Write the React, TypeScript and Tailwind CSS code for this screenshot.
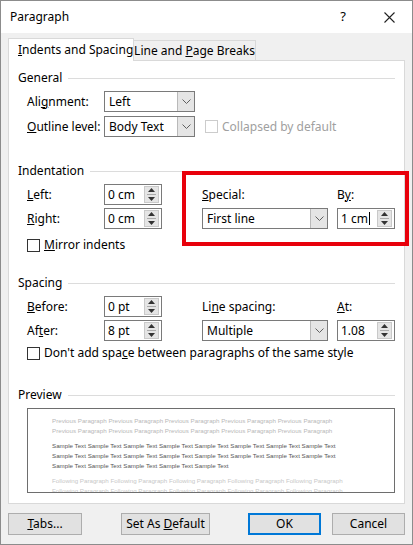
const U = ({ children }: { children: React.ReactNode }) => <span className="underline">{children}</span>;

const Arrow = () => (
  <div className="w-[17px] h-full bg-[#e5e5e5] border-l border-[#b9b9b9] flex items-center justify-center">
    <svg width="9" height="6" viewBox="0 0 9 6"><path d="M0.5 0.5 L4.5 4.5 L8.5 0.5" stroke="#606060" fill="none" /></svg>
  </div>
);

const Select = ({ value, w }: { value: string; w: string }) => (
  <div className={`${w} h-[21px] bg-white border border-[#7a7a7a] flex items-center`}>
    <span className="flex-1 pl-[4px]">{value}</span>
    <Arrow />
  </div>
);

const Spin = ({ value, w = "w-[58px]", caret = false }: { value: string; w?: string; caret?: boolean }) => (
  <div className={`${w} h-[21px] bg-white border border-[#7a7a7a] flex items-center`}>
    <span className="flex-1 pl-[3px] flex items-center">
      {value}
      {caret && <span className="w-px h-[13px] bg-black ml-px" />}
    </span>
    <div className="w-[15px] h-[17px] mr-[2px] bg-[#e5e5e5] border border-[#c9c9c9] flex flex-col items-center justify-center gap-[2px]">
      <svg width="7" height="4" viewBox="0 0 7 4"><path d="M0 4 L3.5 0 L7 4Z" fill="#333" /></svg>
      <div className="w-[9px] h-px bg-[#aaa]" />
      <svg width="7" height="4" viewBox="0 0 7 4"><path d="M0 0 L3.5 4 L7 0Z" fill="#333" /></svg>
    </div>
  </div>
);

const Box = ({ disabled = false }: { disabled?: boolean }) => (
  <div className={`w-[13px] h-[13px] bg-white border ${disabled ? "border-[#ccc]" : "border-[#333]"}`} />
);

const Group = ({ title }: { title: string }) => (
  <div className="flex items-center gap-[6px] h-[14px]">
    <span>{title}</span>
    <div className="flex-1 h-px bg-[#dcdcdc]" />
  </div>
);

const Btn = ({ children, w, primary = false }: { children: React.ReactNode; w: string; primary?: boolean }) => (
  <div className={`${w} h-[22px] flex items-center justify-center bg-[#e1e1e1] ${primary ? "border-2 border-[#0078d7]" : "border border-[#adadad]"}`}>
    <span className="whitespace-nowrap">{children}</span>
  </div>
);

const prev = "Previous Paragraph Previous Paragraph Previous Paragraph Previous Paragraph Previous Paragraph";
const sample = "Sample Text Sample Text Sample Text Sample Text Sample Text Sample Text Sample Text Sample Text";
const foll = "Following Paragraph Following Paragraph Following Paragraph Following Paragraph Following Paragraph";

export default function App() {
  return (
    <div className="w-[413px] h-[545px] bg-[#f0f0f0] border border-[#8c8c8c] text-[12px] text-black flex flex-col" style={{ fontFamily: '"Noto Sans", "Open Sans", sans-serif' }}>
      <div className="h-[32px] bg-white flex items-center pl-[9px] shrink-0">
        <span className="flex-1 text-[12px]">Paragraph</span>
        <span className="w-[46px] text-center text-[13px]">?</span>
        <span className="w-[46px] flex justify-center">
          <svg width="11" height="11" viewBox="0 0 11 11"><path d="M0.5 0.5 L10.5 10.5 M10.5 0.5 L0.5 10.5" stroke="#222" strokeWidth="1.1" /></svg>
        </span>
      </div>

      <div className="px-[7px] pt-[5px] flex flex-col">
        <div className="flex items-end h-[22px] relative z-10">
          <div className="w-[126px] h-[23px] bg-white border border-b-0 border-[#d9d9d9] flex items-center pl-[9px] -mb-px">
            <span className="whitespace-nowrap"><U>I</U>ndents and Spacing</span>
          </div>
          <div className="w-[122px] h-[20px] bg-[#f0f0f0] border border-l-0 border-b-0 border-[#d9d9d9] flex items-center justify-center">
            <span className="whitespace-nowrap">Line and <U>P</U>age Breaks</span>
          </div>
        </div>
        <div className="h-[444px] bg-white border border-[#d9d9d9] relative px-[9px] pt-[10px]">
          <Group title="General" />
          <div className="pl-[9px] mt-[6px] flex flex-col gap-[4px]">
            <div className="flex items-center h-[21px]">
              <span className="w-[77px]">Ali<U>g</U>nment:</span>
              <Select value="Left" w="w-[91px]" />
            </div>
            <div className="flex items-center h-[21px]">
              <span className="w-[77px]"><U>O</U>utline level:</span>
              <Select value="Body Text" w="w-[91px]" />
              <div className="ml-[10px] flex items-center gap-[4px] text-[#a0a0a0]">
                <Box disabled /> <span>Collapsed by default</span>
              </div>
            </div>
          </div>

          <div className="mt-[27px]"><Group title="Indentation" /></div>
          <div className="pl-[9px] mt-[6px] flex">
            <div className="flex flex-col gap-[3px] w-[176px]">
              <div className="flex items-center h-[21px]"><span className="w-[77px]"><U>L</U>eft:</span><Spin value="0 cm" /></div>
              <div className="flex items-center h-[21px]"><span className="w-[77px]"><U>R</U>ight:</span><Spin value="0 cm" /></div>
              <div className="flex items-center gap-[4px] mt-[4px]"><Box /> <span><U>M</U>irror indents</span></div>
            </div>
            <div className="flex gap-[9px]">
              <div className="flex flex-col">
                <span className="h-[21px] flex items-center"><U>S</U>pecial:</span>
                <div className="mt-[3px]"><Select value="First line" w="w-[126px]" /></div>
              </div>
              <div className="flex flex-col">
                <span className="h-[21px] flex items-center">B<U>y</U>:</span>
                <div className="mt-[3px]"><Spin value="1 cm" caret /></div>
              </div>
            </div>
          </div>
          <div className="absolute left-[173px] top-[110px] w-[227px] h-[75px] border-[4px] border-[#e8000b]" />

          <div className="mt-[22px]"><Group title="Spacing" /></div>
          <div className="pl-[9px] mt-[6px] flex">
            <div className="flex flex-col gap-[3px] w-[176px]">
              <div className="flex items-center h-[21px]"><span className="w-[77px]"><U>B</U>efore:</span><Spin value="0 pt" /></div>
              <div className="flex items-center h-[21px]"><span className="w-[77px]">Af<U>t</U>er:</span><Spin value="8 pt" /></div>
            </div>
            <div className="flex gap-[9px]">
              <div className="flex flex-col">
                <span className="h-[21px] flex items-center">Li<U>n</U>e spacing:</span>
                <div className="mt-[3px]"><Select value="Multiple" w="w-[126px]" /></div>
              </div>
              <div className="flex flex-col">
                <span className="h-[21px] flex items-center"><U>A</U>t:</span>
                <div className="mt-[3px]"><Spin value="1.08" /></div>
              </div>
            </div>
          </div>
          <div className="pl-[9px] mt-[3px] flex items-center gap-[4px]"><Box /> <span>Don't add spa<U>c</U>e between paragraphs of the same style</span></div>

          <div className="mt-[26px]"><Group title="Preview" /></div>
          <div className="ml-[9px] mt-[6px] h-[85px] border border-[#6e6e6e] overflow-hidden pl-[24px] pt-[7px] text-[6.2px] leading-[10px] whitespace-nowrap" style={{ fontFamily: '"Liberation Sans", sans-serif' }}>
            <div className="text-[#b8b8b8]">{prev}<br />{prev}</div>
            <div className="text-[#555] mt-[5px]">{sample}<br />{sample}<br />Sample Text Sample Text Sample Text Sample Text Sample Text</div>
            <div className="text-[#c8c8c8] mt-[5px]">{foll}<br />{foll}</div>
          </div>
        </div>
      </div>

      <div className="flex px-[7px] mt-[9px]">
        <Btn w="w-[74px]"><U>T</U>abs...</Btn>
        <div className="ml-[39px]"><Btn w="w-[89px]">Set As <U>D</U>efault</Btn></div>
        <div className="ml-[38px]"><Btn w="w-[73px]" primary>OK</Btn></div>
        <div className="ml-[11px]"><Btn w="w-[73px]">Cancel</Btn></div>
      </div>
    </div>
  );
}
